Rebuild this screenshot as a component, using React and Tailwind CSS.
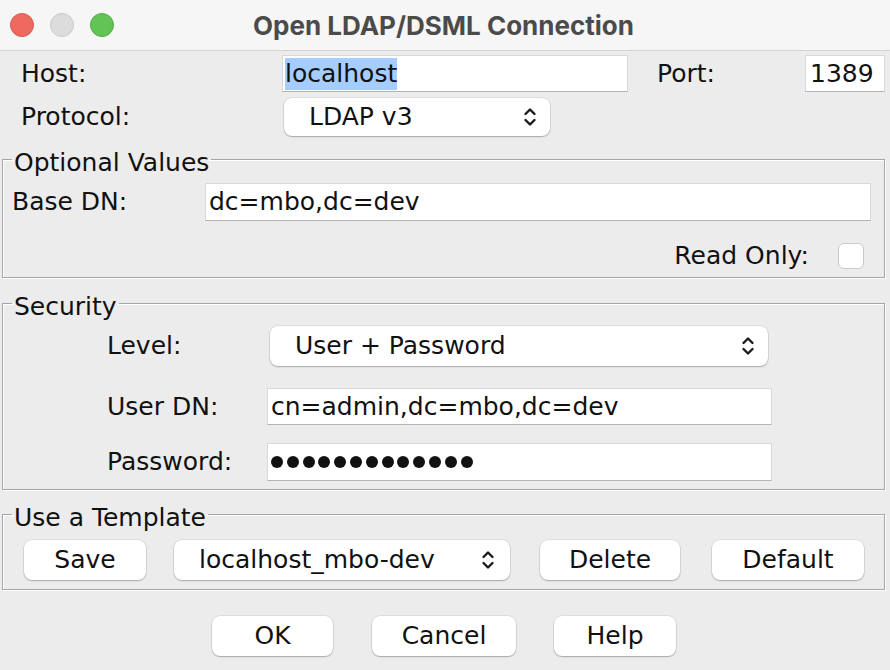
import React from "react";

function Chevrons() {
  return (
    <svg width="14" height="22" viewBox="0 0 14 22" fill="none" stroke="#1a1a1a" strokeWidth="2.4" strokeLinecap="round" strokeLinejoin="round">
      <path d="M2.5 8 L7 3.5 L11.5 8" />
      <path d="M2.5 14 L7 18.5 L11.5 14" />
    </svg>
  );
}

function Field({ className = "", children }) {
  return (
    <div className={"bg-white border border-[#d9d9d9] border-b-[#b3b3b3] flex items-center overflow-hidden whitespace-nowrap " + className}>
      {children}
    </div>
  );
}

function Combo({ className = "", children }) {
  return (
    <div className={"bg-white rounded-[8px] shadow-[0_1px_1.5px_rgba(0,0,0,0.25),0_0_0_0.5px_rgba(0,0,0,0.12)] flex items-center justify-between pl-[25px] pr-[13px] whitespace-nowrap " + className}>
      <span>{children}</span>
      <Chevrons />
    </div>
  );
}

function Button({ className = "", children }) {
  return (
    <div className={"bg-white rounded-[8px] shadow-[0_1px_1.5px_rgba(0,0,0,0.25),0_0_0_0.5px_rgba(0,0,0,0.12)] flex items-center justify-center h-[40px] " + className}>
      {children}
    </div>
  );
}

function Group({ title, className = "", children }) {
  return (
    <fieldset className={"ml-[2px] w-[883px] border border-[#a5a5a5] shadow-[inset_1px_1px_0_#ffffff,1px_1px_0_#ffffff] " + className}>
      <legend className="ml-[9px] px-[2px] pt-[8px] leading-[30px]">
        <span className="bg-[#ececec] block">{title}</span>
      </legend>
      {children}
    </fieldset>
  );
}

export default function App() {
  return (
    <div className="w-[890px] h-[670px] overflow-hidden bg-[#ececec] text-[#111] font-['DejaVu_Sans',sans-serif] text-[25px]">
      {/* Title bar */}
      <div className="h-[51px] bg-[#f6f6f7] border-b border-[#d3d3d3] grid grid-cols-[1fr_auto_1fr] items-center">
        <div className="flex items-center gap-[16px] pl-[10px]">
          <span className="w-[24px] h-[24px] rounded-full bg-[#ee6a5f] border border-[#d65a50]" />
          <span className="w-[24px] h-[24px] rounded-full bg-[#dcdcdc] border border-[#c9c9c9]" />
          <span className="w-[24px] h-[24px] rounded-full bg-[#61c454] border border-[#53ad46]" />
        </div>
        <div className="font-['Inter',sans-serif] font-bold text-[26px] text-[#4b4b4b] pr-[3px]">Open LDAP/DSML Connection</div>
        <div />
      </div>

      {/* Host row */}
      <div className="flex items-center mt-[4px] h-[37px]">
        <div className="w-[282px] pl-[21px]">Host:</div>
        <Field className="w-[346px] h-[37px] pl-[2px]">
          <span className="bg-[#a5cdff] leading-[32px]">localhost</span>
        </Field>
        <div className="ml-[29px] w-[148px]">Port:</div>
        <Field className="w-[80px] h-[37px] pl-[4px]">1389</Field>
      </div>

      {/* Protocol row */}
      <div className="flex items-center mt-[6px] h-[38px]">
        <div className="w-[284px] pl-[21px]">Protocol:</div>
        <Combo className="w-[266px] h-[38px]">LDAP v3</Combo>
      </div>

      {/* Optional Values */}
      <Group title="Optional Values" className="mt-[4px] pt-[5px] pb-[8px]">
        <div className="flex items-center h-[38px]">
          <div className="w-[202px] pl-[9px]">Base DN:</div>
          <Field className="w-[666px] h-[38px] pl-[3px]">dc=mbo,dc=dev</Field>
        </div>
        <div className="flex items-center justify-end mt-[22px] h-[26px] pr-[20px]">
          <span>Read Only:</span>
          <span className="ml-[29px] w-[26px] h-[26px] rounded-[6px] bg-white border border-[#c9c9c9]" />
        </div>
      </Group>

      {/* Security */}
      <Group title="Security" className="mt-[6px] pt-[4px] pb-[8px]">
        <div className="flex items-center h-[40px]">
          <div className="w-[267px] pl-[104px]">Level:</div>
          <Combo className="w-[498px] h-[40px]">User + Password</Combo>
        </div>
        <div className="flex items-center mt-[22px] h-[37px]">
          <div className="w-[264px] pl-[104px]">User DN:</div>
          <Field className="w-[505px] h-[37px] pl-[3px]">cn=admin,dc=mbo,dc=dev</Field>
        </div>
        <div className="flex items-center mt-[18px] h-[38px]">
          <div className="w-[264px] pl-[104px]">Password:</div>
          <Field className="w-[505px] h-[38px] pl-[3px] gap-[3.8px]">
            {Array.from({ length: 13 }).map((_, i) => (
              <span key={i} className="w-[12px] h-[12px] rounded-full bg-[#111] shrink-0" />
            ))}
          </Field>
        </div>
      </Group>

      {/* Use a Template */}
      <Group title="Use a Template" className="mt-[5px] pt-[7px] pb-[9px]">
        <div className="flex items-center h-[40px]">
          <Button className="ml-[21px] w-[122px]">Save</Button>
          <Combo className="ml-[28px] w-[336px] h-[40px] pr-[15px]">localhost_mbo-dev</Combo>
          <Button className="ml-[30px] w-[140px]">Delete</Button>
          <Button className="ml-[32px] w-[152px]">Default</Button>
        </div>
      </Group>

      {/* Bottom buttons */}
      <div className="flex items-center pl-[212px] mt-[26px]">
        <Button className="w-[121px]">OK</Button>
        <Button className="ml-[39px] w-[144px]">Cancel</Button>
        <Button className="ml-[38px] w-[122px]">Help</Button>
      </div>
    </div>
  );
}
